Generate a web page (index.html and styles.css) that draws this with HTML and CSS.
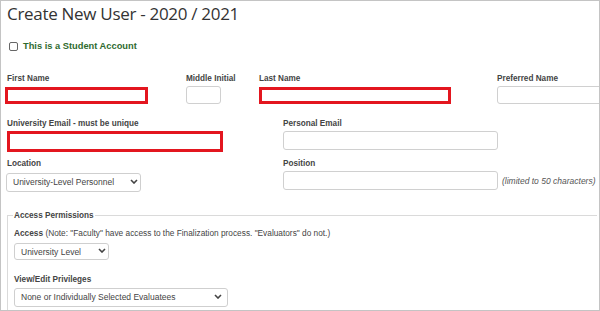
FILE: index.html
```html
<!DOCTYPE html>
<html lang="en">
<head>
    <meta charset="UTF-8">
    <meta name="viewport" content="width=device-width, initial-scale=1.0">
    <title>Create New User</title>
    <link rel="stylesheet" href="styles.css">
</head>
<body>
    <div class="page">
        <h1 class="title">Create New User - 2020 / 2021</h1>

        <label class="student">
            <input type="checkbox" id="isStudent">
            <span>This is a Student Account</span>
        </label>

        <div class="row row-names">
            <div class="field col-first">
                <label for="firstName">First Name</label>
                <input type="text" id="firstName" class="redact first-box">
            </div>
            <div class="field col-mid">
                <label for="middleInitial">Middle Initial</label>
                <input type="text" id="middleInitial" class="mid-box">
            </div>
            <div class="field col-last">
                <label for="lastName">Last Name</label>
                <input type="text" id="lastName" class="redact last-box">
            </div>
            <div class="field col-pref">
                <label for="preferredName">Preferred Name</label>
                <input type="text" id="preferredName" class="pref-box">
            </div>
        </div>

        <div class="row row-email">
            <div class="field col-wide">
                <label for="uniEmail">University Email - must be unique</label>
                <input type="email" id="uniEmail" class="redact uni-box">
            </div>
            <div class="field">
                <label for="personalEmail">Personal Email</label>
                <input type="email" id="personalEmail" class="long-box">
            </div>
        </div>

        <div class="row row-location">
            <div class="field col-wide">
                <label for="location">Location</label>
                <div class="select-wrap loc-select">
                    <select id="location">
                        <option>University-Level Personnel</option>
                    </select>
                    <svg class="chevron" viewBox="0 0 8 5" width="8" height="5"><path d="M1 1 L4 4 L7 1" fill="none" stroke="#444" stroke-width="1.6"/></svg>
                </div>
            </div>
            <div class="field">
                <label for="position">Position</label>
                <div class="inline">
                    <input type="text" id="position" class="long-box" maxlength="50">
                    <span class="hint">(limited to 50 characters)</span>
                </div>
            </div>
        </div>

        <fieldset class="perms">
            <legend>Access Permissions</legend>
            <div class="access-note"><b>Access</b> (Note: "Faculty" have access to the Finalization process. "Evaluators" do not.)</div>
            <div class="select-wrap access-select">
                <select id="access">
                    <option>University Level</option>
                </select>
                <svg class="chevron" viewBox="0 0 8 5" width="8" height="5"><path d="M1 1 L4 4 L7 1" fill="none" stroke="#444" stroke-width="1.6"/></svg>
            </div>

            <label class="priv-label" for="privileges">View/Edit Privileges</label>
            <div class="select-wrap priv-select">
                <select id="privileges">
                    <option>None or Individually Selected Evaluatees</option>
                </select>
                <svg class="chevron" viewBox="0 0 8 5" width="8" height="5"><path d="M1 1 L4 4 L7 1" fill="none" stroke="#444" stroke-width="1.6"/></svg>
            </div>
        </fieldset>
    </div>
</body>
</html>
```

FILE: styles.css
```css
body {
    margin: 0;
    background: #fff;
    font-family: "Liberation Sans", Arial, sans-serif;
    color: #3c3c3c;
}
.page {
    box-sizing: border-box;
    width: 600px;
    height: 311px;
    border: 1px solid #c4c4c4;
    padding-left: 6px;
    overflow: hidden;
}
.title {
    margin: 0;
    font-family: "Open Sans", sans-serif;
    font-weight: normal;
    font-size: 17px;
    letter-spacing: -0.3px;
    line-height: 26px;
    color: #333;
}
.student {
    display: flex;
    align-items: center;
    margin-top: 14px;
    margin-left: 2px;
    font-size: 9.3px;
    font-weight: bold;
    color: #2f6b2f;
}
.student input {
    appearance: none;
    width: 9px;
    height: 9px;
    margin: 0 5px 0 0;
    border: 1px solid #666;
    border-radius: 2px;
    background: #fff;
}
.row {
    display: flex;
}
.row-names {
    margin-top: 23px;
}
.row-email {
    margin-top: 15px;
}
.row-location {
    margin-top: 7px;
}
.field {
    display: flex;
    flex-direction: column;
    flex-shrink: 0;
}
.field label {
    font-size: 8.2px;
    font-weight: bold;
    line-height: 10px;
    height: 10px;
    margin-bottom: 2px;
    color: #444;
}
input[type="text"], input[type="email"] {
    box-sizing: border-box;
    margin: 0;
    border: 1px solid #d0d0d0;
    border-radius: 3px;
    background: #fff;
}
.col-first { width: 179px; }
.col-mid { width: 73px; }
.col-last { width: 238px; }
.col-pref { width: 130px; }
.col-wide { width: 276px; }

input.redact {
    border: 3px solid #e3161f;
    border-radius: 0;
}
.first-box {
    width: 143px;
    height: 17px;
    margin: 1px 0 0 -2px !important;
}
.mid-box {
    width: 35px;
    height: 18px;
}
.last-box {
    width: 192px;
    height: 17px;
    margin-top: 1px !important;
}
.pref-box {
    width: 120px;
    height: 18px;
}
.uni-box {
    width: 216px;
    height: 21px;
}
.long-box {
    width: 215px;
    height: 19px;
}
.inline {
    display: flex;
    align-items: center;
}
.hint {
    margin-left: 4px;
    font-size: 8.5px;
    font-style: italic;
    color: #555;
}

.select-wrap {
    position: relative;
}
.select-wrap select {
    appearance: none;
    box-sizing: border-box;
    margin: 0;
    padding: 0 0 0 6px;
    border: 1px solid #cfcfcf;
    border-radius: 3px;
    background: #fff;
    font-family: "Liberation Sans", Arial, sans-serif;
    font-size: 8.5px;
    color: #444;
}
.chevron {
    position: absolute;
    top: 50%;
    margin-top: -2px;
    pointer-events: none;
}
.loc-select { margin-left: -1px; }
.loc-select select { width: 135px; height: 19px; }
.loc-select .chevron { left: 124px; }

.perms {
    margin: 19px 2px 0 0;
    padding: 0 0 0 6px;
    border: 1px solid #dadada;
    border-right: none;
    height: 120px;
}
.perms legend {
    margin-left: -1px;
    padding: 0 1px;
    font-size: 8.2px;
    font-weight: bold;
    color: #444;
}
.access-note {
    margin-top: 8px;
    font-size: 8.3px;
    line-height: 10px;
    color: #444;
}
.access-select {
    margin-top: 3px;
}
.access-select select { width: 95px; height: 17px; }
.access-select .chevron { left: 84px; }
.priv-label {
    display: block;
    margin-top: 15px;
    font-size: 8.2px;
    font-weight: bold;
    line-height: 10px;
    color: #444;
}
.priv-select {
    margin-top: 1px;
}
.priv-select select { width: 214px; height: 19px; }
.priv-select .chevron { left: 200px; }
```
